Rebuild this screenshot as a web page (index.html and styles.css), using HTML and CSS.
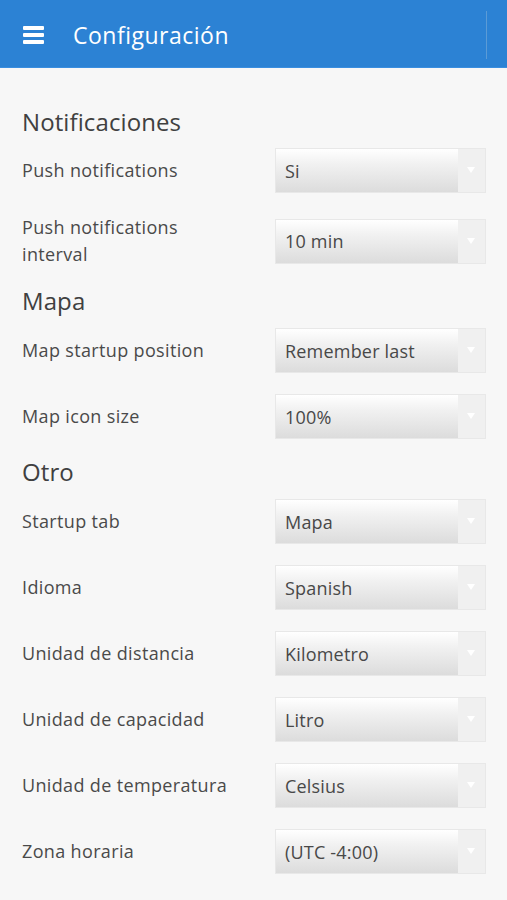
FILE: index.html
```html
<!DOCTYPE html>
<html lang="es">
<head>
  <meta charset="UTF-8" />
  <title>Configuración</title>
  <link rel="stylesheet" href="styles.css">
</head>
<body>

  <header class="topbar">
    <span class="menu-icon"><span></span><span></span><span></span></span>
    <span class="topbar-title">Configuración</span>
    <span class="topbar-divider"></span>
  </header>

  <main class="settings">
    <!-- Notificaciones -->
    <h2 class="section-title first">Notificaciones</h2>
    <div class="setting-row">
      <label class="setting-label">Push notifications</label>
      <div class="select-box"><span class="select-value">Si</span><span class="select-arrow"></span></div>
    </div>
    <div class="setting-row">
      <label class="setting-label">Push notifications interval</label>
      <div class="select-box"><span class="select-value">10 min</span><span class="select-arrow"></span></div>
    </div>

    <!-- Mapa -->
    <h2 class="section-title">Mapa</h2>
    <div class="setting-row">
      <label class="setting-label">Map startup position</label>
      <div class="select-box"><span class="select-value">Remember last</span><span class="select-arrow"></span></div>
    </div>
    <div class="setting-row">
      <label class="setting-label">Map icon size</label>
      <div class="select-box"><span class="select-value">100%</span><span class="select-arrow"></span></div>
    </div>

    <!-- Otro -->
    <h2 class="section-title">Otro</h2>
    <div class="setting-row">
      <label class="setting-label">Startup tab</label>
      <div class="select-box"><span class="select-value">Mapa</span><span class="select-arrow"></span></div>
    </div>
    <div class="setting-row">
      <label class="setting-label">Idioma</label>
      <div class="select-box"><span class="select-value">Spanish</span><span class="select-arrow"></span></div>
    </div>
    <div class="setting-row">
      <label class="setting-label">Unidad de distancia</label>
      <div class="select-box"><span class="select-value">Kilometro</span><span class="select-arrow"></span></div>
    </div>
    <div class="setting-row">
      <label class="setting-label">Unidad de capacidad</label>
      <div class="select-box"><span class="select-value">Litro</span><span class="select-arrow"></span></div>
    </div>
    <div class="setting-row">
      <label class="setting-label">Unidad de temperatura</label>
      <div class="select-box"><span class="select-value">Celsius</span><span class="select-arrow"></span></div>
    </div>
    <div class="setting-row">
      <label class="setting-label">Zona horaria</label>
      <div class="select-box"><span class="select-value">(UTC -4:00)</span><span class="select-arrow"></span></div>
    </div>

    <h2 class="section-title last">Cambiar Contraseña</h2>
  </main>

</body>
</html>
```

FILE: styles.css
```css
body {
  margin: 0;
  background: #f7f7f7;
  font-family: "Open Sans", "Noto Sans", sans-serif;
  color: #4a4a4a;
}
.topbar {
  display: flex;
  align-items: center;
  height: 68px;
  background: #2c82d4;
  color: #fff;
  padding: 3px 20px 0 23px;
  border-bottom: 1px solid #3a8ee0;
  box-sizing: border-box;
}
.menu-icon {
  display: flex;
  flex-direction: column;
  gap: 3px;
  width: 21px;
  margin-right: 29px;
}
.menu-icon span {
  display: block;
  height: 4px;
  background: #fff;
  border-radius: 1px;
}
.topbar-title {
  flex: 1;
  font-size: 23px;
  letter-spacing: 0.5px;
  padding-bottom: 1px;
}
.topbar-divider {
  width: 1px;
  height: 48px;
  background: #5b9bd6;
}
.settings {
  padding: 0 21px 0 22px;
}
.section-title {
  margin: 21px 0 15px;
  font-size: 24px;
  line-height: 24px;
  font-weight: normal;
  color: #404040;
  letter-spacing: 0.1px;
}
.section-title.first {
  margin-top: 42px;
  margin-bottom: 14px;
}
.section-title.last {
  margin-top: 24px;
}
.setting-row {
  display: flex;
  align-items: center;
  margin-bottom: 21px;
}
.setting-label {
  flex: 1;
  font-size: 18px;
  line-height: 27px;
  letter-spacing: 0.35px;
  padding-right: 35px;
}
.select-box {
  flex: 0 0 211px;
  display: flex;
  height: 45px;
  box-sizing: border-box;
  border: 1px solid #e8e8e8;
  background: #efefef;
}
.select-value {
  flex: 1;
  display: flex;
  align-items: center;
  padding-left: 9px;
  font-size: 18px;
  letter-spacing: 0.2px;
  color: #484848;
  background: linear-gradient(#ffffff 0%, #f1f1f1 35%, #dcdcdc 100%);
}
.select-arrow {
  width: 27px;
  position: relative;
  background: #f0f0f0;
}
.select-arrow::after {
  content: "";
  position: absolute;
  left: 9px;
  top: 18px;
  border-left: 4px solid transparent;
  border-right: 4px solid transparent;
  border-top: 6px solid #fff;
}
```
